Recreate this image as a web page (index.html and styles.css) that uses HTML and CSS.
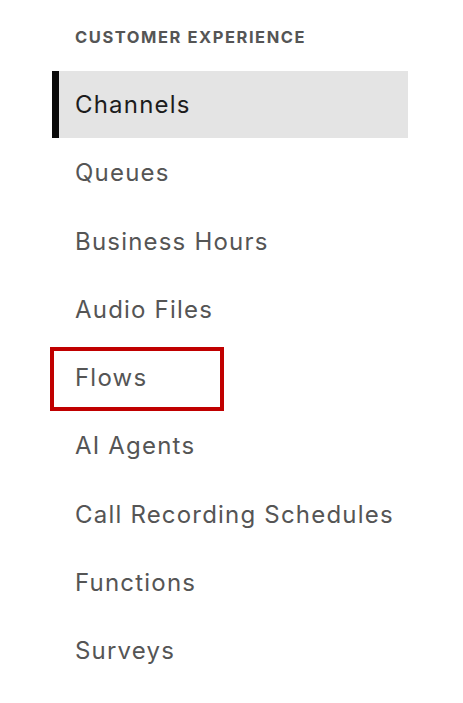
FILE: index.html
```html
<!DOCTYPE html>
<html>
<head>
<meta charset="utf-8">
<link rel="stylesheet" href="styles.css">
</head>
<body>
<nav class="nav">
  <div class="heading">CUSTOMER EXPERIENCE</div>
  <ul class="list">
    <li class="item active">Channels</li>
    <li class="item">Queues</li>
    <li class="item">Business Hours</li>
    <li class="item">Audio Files</li>
    <li class="item highlight">Flows</li>
    <li class="item">AI Agents</li>
    <li class="item">Call Recording Schedules</li>
    <li class="item">Functions</li>
    <li class="item">Surveys</li>
  </ul>
</nav>
</body>
</html>
```

FILE: styles.css
```css
html, body {
  margin: 0;
  padding: 0;
  background: #ffffff;
}
body {
  font-family: Inter, "Noto Sans", sans-serif;
}
.nav {
  padding: 26px 0 0 52px;
  width: 356px;
}
.heading {
  font-size: 16.5px;
  font-weight: 700;
  color: #555555;
  padding-left: 23px;
  line-height: 22px;
  height: 22px;
  margin-bottom: 23px;
  letter-spacing: 1.55px;
}
.list {
  list-style: none;
  margin: 0;
  padding: 0;
}
.item {
  position: relative;
  height: 68.3px;
  line-height: 68px;
  font-size: 24px;
  letter-spacing: 1.2px;
  color: #555555;
  padding-left: 23px;
  box-sizing: border-box;
}
.item.active {
  background: #e4e4e4;
  color: #1c1c1c;
  height: 67px;
  margin-bottom: 1.3px;
  border-left: 7px solid #0a0a0a;
  padding-left: 16px;
}
.item.highlight::after {
  content: "";
  position: absolute;
  left: -2px;
  top: 3px;
  width: 174px;
  height: 64px;
  border: 4px solid #c00000;
  box-sizing: border-box;
}
```
